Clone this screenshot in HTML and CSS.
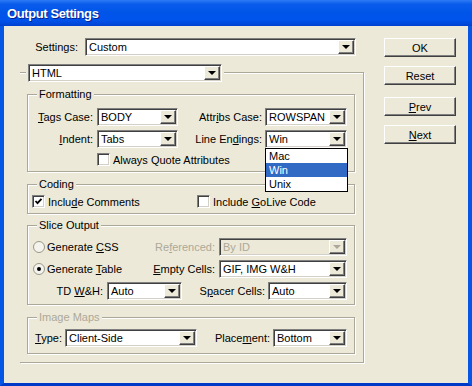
FILE: index.html
```html
<!DOCTYPE html>
<html lang="en">
<head>
    <meta charset="UTF-8">
    <meta name="viewport" content="width=device-width, initial-scale=1.0">
    <title>Output Settings</title>
    <link rel="stylesheet" href="styles.css">
</head>
<body>
<div class="window">
    <div class="titlebar">Output Settings</div>
    <div class="client">
        <div class="main">
            <div class="settings-row">
                <span class="settings-label">Settings:</span>
                <div class="select settings-select"><span class="value">Custom</span><span class="arrow"></span></div>
            </div>

            <div class="frame">
                <div class="select frame-select"><span class="value">HTML</span><span class="arrow"></span></div>

                <div class="group group-formatting">
                    <div class="legend">Formatting</div>
                    <div class="grid fmt-grid">
                        <span class="lbl pad4"><u>T</u>ags Case:</span>
                        <div class="select"><span class="value">BODY</span><span class="arrow"></span></div>
                        <span class="lbl pad3">Attr<u>i</u>bs Case:</span>
                        <div class="select"><span class="value">ROWSPAN</span><span class="arrow"></span></div>
                        <span class="lbl pad4"><u>I</u>ndent:</span>
                        <div class="select"><span class="value">Tabs</span><span class="arrow"></span></div>
                        <span class="lbl pad3">Line En<u>d</u>ings:</span>
                        <div class="select open">
                            <span class="value">Win</span><span class="arrow"></span>
                            <ul class="dropdown">
                                <li>Mac</li>
                                <li class="selected">Win</li>
                                <li>Unix</li>
                            </ul>
                        </div>
                    </div>
                    <div class="check quote-check"><span class="box"></span><span>Always Quote Attributes</span></div>
                </div>

                <div class="group group-coding">
                    <div class="legend">Coding</div>
                    <div class="coding-row">
                        <div class="check"><span class="box checked"><svg width="9" height="9" viewBox="0 0 9 9"><polyline points="1.5,4 3.5,6.2 7.5,1.8" fill="none" stroke="#000" stroke-width="1.8"/></svg></span><span>Inclu<u>d</u>e Comments</span></div>
                        <div class="check"><span class="box"></span><span>Include <u>G</u>oLive Code</span></div>
                    </div>
                </div>

                <div class="group group-slice">
                    <div class="legend">Slice Output</div>
                    <div class="grid slice-grid">
                        <div class="radio-item"><span class="radio"></span><span>Generate <u>C</u>SS</span></div>
                        <span class="lbl pad4 disabled">Re<u>f</u>erenced:</span>
                        <div class="select is-disabled"><span class="value">By ID</span><span class="arrow"></span></div>
                        <div class="radio-item"><span class="radio on"></span><span>Generate <u>T</u>able</span></div>
                        <span class="lbl pad4"><u>E</u>mpty Cells:</span>
                        <div class="select"><span class="value">GIF, IMG W&amp;H</span><span class="arrow"></span></div>
                    </div>
                    <div class="grid td-grid">
                        <span class="lbl pad4">TD <u>W</u>&amp;H:</span>
                        <div class="select"><span class="value">Auto</span><span class="arrow"></span></div>
                        <span class="lbl pad3">S<u>p</u>acer Cells:</span>
                        <div class="select"><span class="value">Auto</span><span class="arrow"></span></div>
                    </div>
                </div>

                <div class="group group-maps">
                    <div class="legend disabled">Image Maps</div>
                    <div class="grid maps-grid">
                        <span class="lbl pad3"><u>T</u>ype:</span>
                        <div class="select"><span class="value">Client-Side</span><span class="arrow"></span></div>
                        <span class="lbl pad3">Place<u>m</u>ent:</span>
                        <div class="select"><span class="value">Bottom</span><span class="arrow"></span></div>
                    </div>
                </div>
            </div>
        </div>

        <div class="side">
            <button class="btn btn-ok">OK</button>
            <button class="btn btn-reset">Reset</button>
            <button class="btn btn-prev"><u>P</u>rev</button>
            <button class="btn btn-next"><u>N</u>ext</button>
        </div>
    </div>
</div>
</body>
</html>
```

FILE: styles.css
```css
* {
  box-sizing: border-box;
  margin: 0;
  padding: 0;
}

body {
  font-family: "Liberation Sans", Arial, sans-serif;
  font-size: 11px;
  color: #000;
  background: #ECE9D8;
}

u {
  text-decoration: underline;
  text-underline-offset: 1px;
}

.window {
  width: 472px;
  height: 386px;
  display: flex;
  flex-direction: column;
  background: #ECE9D8;
}

.titlebar {
  height: 26px;
  padding: 6px 0 0 7px;
  line-height: 16px;
  font-size: 13px;
  font-weight: bold;
  letter-spacing: -0.4px;
  color: #fff;
  text-shadow: 1px 1px 0 #0A1E8C;
  background: linear-gradient(to bottom, #2E7BF6 0, #0A5CEB 4px, #0055E8 12px, #0153EC 20px, #0048DA 24px, #0040CC 26px);
}

.client {
  flex: 1;
  display: flex;
  border-left: 4px solid #0656E6;
  border-right: 4px solid #0656E6;
  border-bottom: 3px solid #0038C8;
}

.main {
  width: 362px;
  padding-top: 12px;
}

/* settings row */
.settings-row {
  display: flex;
  align-items: center;
  height: 18px;
}

.settings-label {
  width: 74px;
  text-align: right;
  margin-right: 7px;
}

.settings-select {
  width: 271px;
}

/* combo boxes */
.select {
  position: relative;
  display: flex;
  height: 18px;
  padding: 1px;
  background: #fff;
  border: 1px solid;
  border-color: #808080 #fff #fff #808080;
  box-shadow: inset 1px 1px 0 #404040, inset -1px -1px 0 #D4D0C8;
}

.select .value {
  flex: 1;
  padding-left: 2px;
  line-height: 14px;
  white-space: nowrap;
  overflow: hidden;
}

.select .arrow {
  width: 16px;
  display: flex;
  align-items: center;
  justify-content: center;
  background: #ECE9D8;
  border: 1px solid;
  border-color: #fff #404040 #404040 #fff;
  box-shadow: inset -1px -1px 0 #808080;
}

.select .arrow::after {
  content: "";
  border-top: 4px solid #000;
  border-left: 4px solid transparent;
  border-right: 4px solid transparent;
  margin-left: -1px;
}

.select.is-disabled {
  background: #ECE9D8;
}

.select.is-disabled .value {
  color: #ACA899;
}

.select.is-disabled .arrow::after {
  border-top-color: #ACA899;
}

.dropdown {
  position: absolute;
  top: calc(100% + 1px);
  left: -1px;
  width: 83px;
  list-style: none;
  background: #fff;
  border: 1px solid #000;
  z-index: 5;
}

.dropdown li {
  height: 14px;
  line-height: 14px;
  padding-left: 3px;
}

.dropdown li.selected {
  background: #316AC5;
  color: #fff;
}

/* the html frame with its combo header */
.frame {
  margin: 16px 0 0 16px;
  width: 344px;
  padding-bottom: 8px;
  border: 1px solid #ACA899;
  border-left: none;
  box-shadow: 1px 1px 0 #fff, inset 0 1px 0 #fff;
}

.frame-select {
  width: 194px;
  margin: -9px 0 0 8px;
  box-shadow: inset 1px 1px 0 #404040, inset -1px -1px 0 #D4D0C8, 0 0 0 2px #ECE9D8;
}

.group {
  margin-left: 7px;
  width: 328px;
  border: 1px solid #ACA899;
  box-shadow: 1px 1px 0 #fff, inset 1px 1px 0 #fff;
}

.legend {
  display: table;
  margin: -7px 0 0 9px;
  padding: 0 2px;
  height: 13px;
  line-height: 13px;
  background: #ECE9D8;
}

.disabled {
  color: #ACA899;
}

.group-formatting {
  margin-top: 12px;
  padding-bottom: 5px;
}

.group-coding {
  margin-top: 12px;
  padding-bottom: 5px;
}

.group-slice {
  margin-top: 11px;
  padding-bottom: 4px;
}

.group-maps {
  margin-top: 12px;
  padding-bottom: 6px;
}

.grid {
  display: grid;
  align-items: center;
  grid-auto-rows: 18px;
  row-gap: 4px;
}

.lbl {
  text-align: right;
  white-space: nowrap;
}

.pad4 {
  padding-right: 4px;
}

.pad3 {
  padding-right: 3px;
}

.fmt-grid {
  margin-top: 7px;
  grid-template-columns: 69px 81px 87px 82px;
}

.slice-grid {
  margin-top: 6px;
  grid-template-columns: 120px 71px 128px;
}

.td-grid {
  margin-top: 4px;
  grid-template-columns: 79px 75px 86px 79px;
}

.maps-grid {
  margin-top: 5px;
  grid-template-columns: 37px 132px 76px 74px;
}

/* checkboxes and radios */
.check {
  display: flex;
  align-items: center;
  height: 13px;
  white-space: nowrap;
}

.check .box {
  width: 13px;
  height: 13px;
  margin-right: 3px;
  display: flex;
  align-items: center;
  justify-content: center;
  background: #fff;
  border: 1px solid;
  border-color: #808080 #fff #fff #808080;
  box-shadow: inset 1px 1px 0 #404040, inset -1px -1px 0 #D4D0C8;
}

.quote-check {
  margin: 5px 0 0 69px;
}

.coding-row {
  display: grid;
  grid-template-columns: 165px 1fr;
  margin-top: 4px;
  padding-left: 4px;
}

.radio-item {
  display: flex;
  align-items: center;
  padding-left: 5px;
  white-space: nowrap;
}

.radio {
  width: 12px;
  height: 12px;
  margin-right: 2px;
  border-radius: 50%;
  background: #F4F3EE;
  border: 1px solid #9A9888;
  display: flex;
  align-items: center;
  justify-content: center;
}

.radio.on::after {
  content: "";
  width: 4px;
  height: 4px;
  border-radius: 50%;
  background: #000;
}

/* dialog buttons */
.side {
  display: flex;
  flex-direction: column;
  padding: 12px 0 0 18px;
}

.btn {
  width: 72px;
  height: 19px;
  font-family: "Liberation Sans", Arial, sans-serif;
  font-size: 11px;
  color: #000;
  background: #ECE9D8;
  border: 1px solid;
  border-color: #fff #404040 #404040 #fff;
  box-shadow: inset -1px -1px 0 #808080;
}

.btn-reset {
  margin-top: 9px;
}

.btn-prev {
  margin-top: 12px;
}

.btn-next {
  margin-top: 9px;
}
```
